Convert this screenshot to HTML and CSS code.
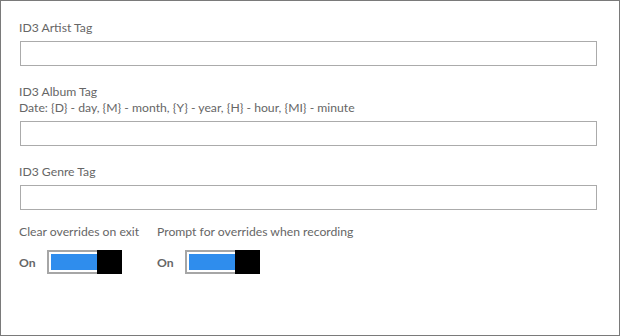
FILE: index.html
```html
<!DOCTYPE html>
<html lang="en">
<head>
    <meta charset="UTF-8">
    <title>ID3 Tags</title>
    <link rel="stylesheet" href="styles.css">
</head>
<body>
    <div class="panel">
        <div class="field field-first">
            <label for="artist">ID3 Artist Tag</label>
            <input type="text" id="artist">
        </div>
        <div class="field">
            <label for="album">ID3 Album Tag<br>Date: {D} - day, {M} - month, {Y} - year, {H} - hour, {MI} - minute</label>
            <input type="text" id="album">
        </div>
        <div class="field">
            <label for="genre">ID3 Genre Tag</label>
            <input type="text" id="genre">
        </div>
        <div class="toggles">
            <div class="toggle-group">
                <div class="toggle-label">Clear overrides on exit</div>
                <div class="toggle-row">
                    <span class="state">On</span>
                    <span class="switch"><span class="track"><span class="fill"></span></span><span class="thumb"></span></span>
                </div>
            </div>
            <div class="toggle-group">
                <div class="toggle-label">Prompt for overrides when recording</div>
                <div class="toggle-row">
                    <span class="state">On</span>
                    <span class="switch"><span class="track"><span class="fill"></span></span><span class="thumb"></span></span>
                </div>
            </div>
        </div>
    </div>
</body>
</html>
```

FILE: styles.css
```css
html, body { margin: 0; padding: 0; background: #fff; }
body { font-family: Lato, 'Open Sans', sans-serif; font-size: 12.2px; color: #666; }
.panel { width: 620px; height: 336px; box-sizing: border-box; border: 1px solid #7a7a7a; padding: 19px 23px 0 18px; }
.field { margin-top: 18px; }
.field-first { margin-top: 0; }
.field label { display: block; line-height: 16px; }
.field input { display: block; box-sizing: border-box; width: 577px; height: 25px; margin: 5px 0 0 1px; border: 1px solid #ababab; padding: 0 6px; font: inherit; outline: none; }
.toggles { display: grid; grid-template-columns: 138px auto; margin-top: 14px; }
.toggle-label { line-height: 16px; }
.toggle-row { display: flex; align-items: center; margin-top: 10px; }
.state { font-weight: bold; width: 28px; }
.switch { display: inline-flex; width: 75px; height: 24px; }
.track { flex: 1; display: flex; border: 2px solid #a6a6a6; border-right: 0; padding: 2px 0 2px 2px; }
.fill { flex: 1; background: #2f8ded; }
.thumb { width: 25px; background: #000; }
```
